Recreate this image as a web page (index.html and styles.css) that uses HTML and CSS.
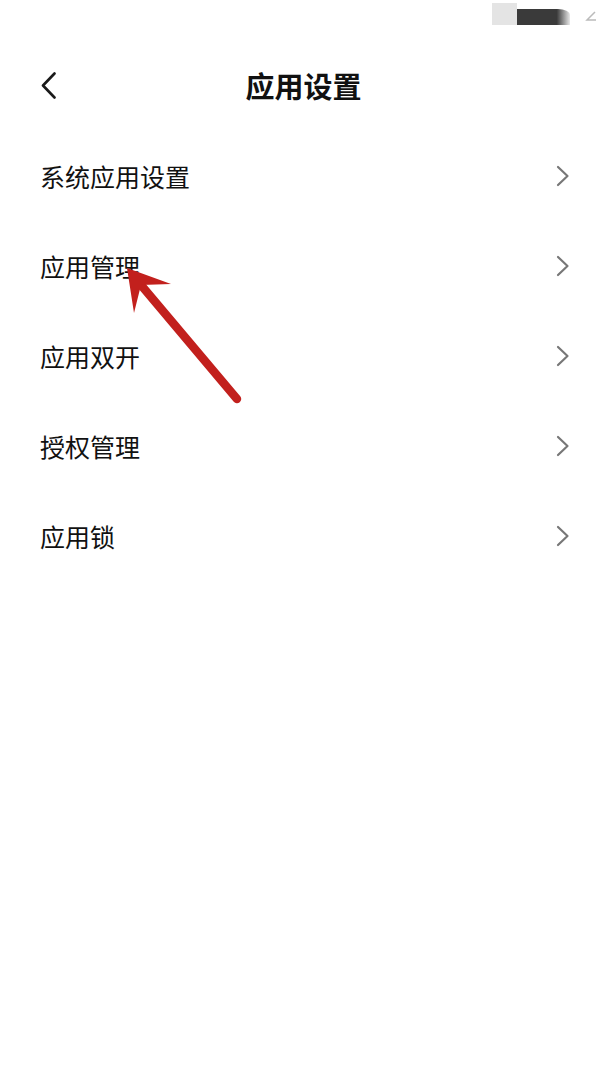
FILE: index.html
```html
<!DOCTYPE html>
<html lang="zh-CN">
<head>
<meta charset="utf-8">
<title>应用设置</title>
<link rel="stylesheet" href="styles.css">
</head>
<body>
<div class="page">
  <div class="statusbar">
    <div class="sb-light"></div>
    <div class="sb-dark"></div>
    <div class="sb-mark"><svg width="14" height="14" viewBox="0 0 14 14"><path d="M11 3 L3 11 L12 11" fill="none" stroke="#bbb" stroke-width="1.5"/></svg></div>
  </div>
  <header class="header">
    <div class="back">
      <svg width="16" height="28" viewBox="0 0 16 28"><path d="M13.5 1.5 L2 13.5 L13.5 25.5" fill="none" stroke="#1a1a1a" stroke-width="2.6" stroke-linecap="round" stroke-linejoin="round"/></svg>
    </div>
    <h1 class="title">应用设置</h1>
    <div class="spacer"></div>
  </header>
  <ul class="list">
    <li class="row"><span class="label">系统应用设置</span><svg class="chev" width="14" height="22" viewBox="0 0 14 22"><path d="M2 2 L11.5 11 L2 20" fill="none" stroke="#777" stroke-width="2.2" stroke-linecap="round" stroke-linejoin="round"/></svg></li>
    <li class="row"><span class="label">应用管理</span><svg class="chev" width="14" height="22" viewBox="0 0 14 22"><path d="M2 2 L11.5 11 L2 20" fill="none" stroke="#777" stroke-width="2.2" stroke-linecap="round" stroke-linejoin="round"/></svg></li>
    <li class="row"><span class="label">应用双开</span><svg class="chev" width="14" height="22" viewBox="0 0 14 22"><path d="M2 2 L11.5 11 L2 20" fill="none" stroke="#777" stroke-width="2.2" stroke-linecap="round" stroke-linejoin="round"/></svg></li>
    <li class="row"><span class="label">授权管理</span><svg class="chev" width="14" height="22" viewBox="0 0 14 22"><path d="M2 2 L11.5 11 L2 20" fill="none" stroke="#777" stroke-width="2.2" stroke-linecap="round" stroke-linejoin="round"/></svg></li>
    <li class="row"><span class="label">应用锁</span><svg class="chev" width="14" height="22" viewBox="0 0 14 22"><path d="M2 2 L11.5 11 L2 20" fill="none" stroke="#777" stroke-width="2.2" stroke-linecap="round" stroke-linejoin="round"/></svg></li>
  </ul>
  <svg class="arrow" width="607" height="1080" viewBox="0 0 607 1080">
    <line x1="237" y1="399" x2="141" y2="285" stroke="#c2201d" stroke-width="8.5" stroke-linecap="round"/>
    <path d="M127 268 L171 284 L141 285 L134 313 Z" fill="#c2201d"/>
  </svg>
</div>
</body>
</html>
```

FILE: styles.css
```css
* { box-sizing: border-box; }
html, body {
  margin: 0;
  padding: 0;
  background: #ffffff;
}
body {
  font-family: "Noto Sans CJK SC", "Noto Sans", sans-serif;
  color: #1a1a1a;
}
.page {
  position: relative;
  width: 607px;
  height: 1080px;
  overflow: hidden;
  background: #ffffff;
}
.statusbar {
  height: 41px;
  display: flex;
  justify-content: flex-end;
  align-items: flex-start;
  padding: 3px 0 0 0;
}
.sb-light {
  width: 25px;
  height: 22px;
  background: #e4e4e4;
}
.sb-dark {
  width: 53px;
  height: 16px;
  margin-top: 6px;
  background: linear-gradient(90deg, #3a3a3a 0%, #3a3a3a 75%, #e8e8e8 100%);
  border-top-right-radius: 12px 6px;
}
.sb-mark {
  width: 37px;
  height: 22px;
  padding: 6px 0 0 14px;
}
.sb-mark svg { display: block; }
.header {
  height: 90px;
  display: grid;
  grid-template-columns: 1fr auto 1fr;
  align-items: center;
}
.back {
  padding-left: 41px;
  display: flex;
  align-items: center;
  height: 28px;
}
.back svg { display: block; }
.title {
  margin: 0;
  font-size: 29px;
  font-weight: 700;
  line-height: 1;
  letter-spacing: 0;
  color: #111;
  padding-bottom: 2px;
}
.list {
  list-style: none;
  margin: 0;
  padding: 0;
}
.row {
  height: 90px;
  display: flex;
  align-items: center;
  justify-content: space-between;
  padding: 0 37px 0 40px;
}
.label {
  font-size: 25px;
  font-weight: 400;
  line-height: 1;
  color: #111;
}
.chev { display: block; }
.arrow {
  position: absolute;
  left: 0;
  top: 0;
  pointer-events: none;
}
```
